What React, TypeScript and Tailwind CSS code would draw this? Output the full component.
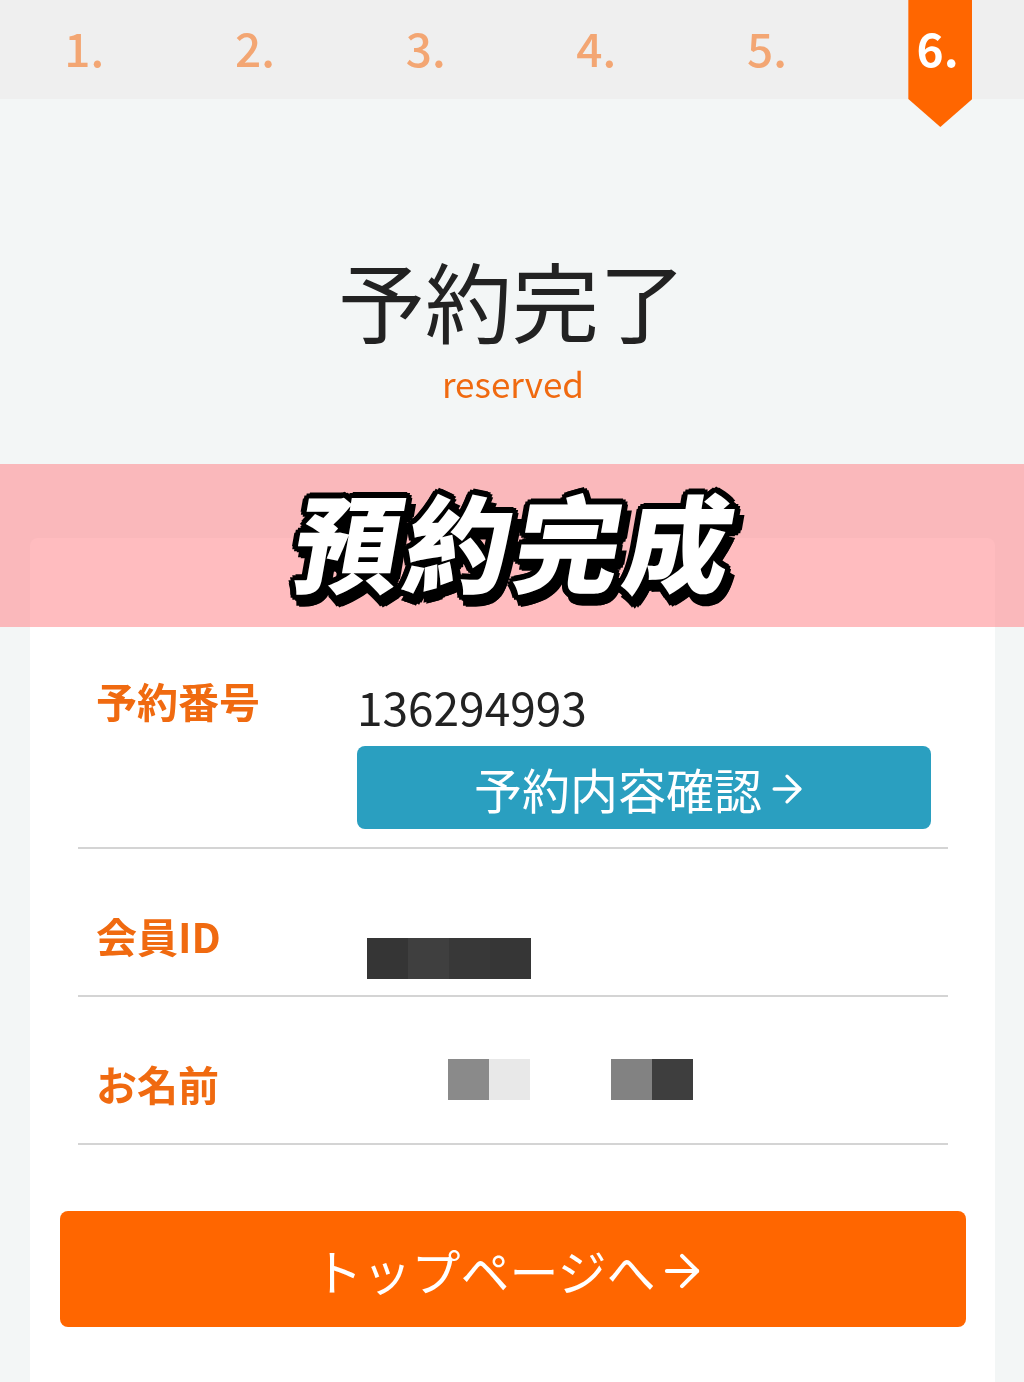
import { ArrowRight } from 'lucide-react';

const jp = 'font-["Noto_Sans_CJK_JP","Noto_Sans",sans-serif]';

const steps = ['1.', '2.', '3.', '4.', '5.', '6.'];

function StepBar() {
  return (
    <div className="grid grid-cols-6 h-[99px] bg-[#efefef] shrink-0">
      {steps.map((s, i) => {
        const active = i === 5;
        return (
          <div key={s} className="relative flex justify-center">
            {active && (
              <div className="absolute top-0 left-[87px] -translate-x-1/2 w-[64px] h-[127px] bg-[#ff6600] [clip-path:polygon(0_0,100%_0,100%_78%,50%_100%,0_78%)]" />
            )}
            <span
              className={`relative pt-[15px] pr-[2px] text-[46px] leading-[64px] ${active ? 'text-white font-bold' : 'text-[#f3a673] font-medium'}`}
            >
              {s}
            </span>
          </div>
        );
      })}
    </div>
  );
}

function Row({ label, labelTop, children, className }: { label: string; labelTop: string; children: React.ReactNode; className: string }) {
  return (
    <div className={`flex border-b-2 border-[#d4d4d4] ${className}`}>
      <div className={`w-[279px] pl-[18px] shrink-0 text-[41px] leading-[56px] font-bold text-[#f06a10] ${labelTop}`}>{label}</div>
      <div className="flex-1 min-w-0">{children}</div>
    </div>
  );
}

function Mosaic({ colors }: { colors: string[] }) {
  return (
    <div className="flex">
      {colors.map((c, i) => (
        <div key={i} className="w-[41px] h-[41px]" style={{ backgroundColor: c }} />
      ))}
    </div>
  );
}

export default function App() {
  return (
    <div className={`relative h-[1382px] overflow-hidden bg-[#f3f6f6] flex flex-col blur-[0.5px] ${jp}`}>
      <StepBar />

      {/* Title */}
      <div className="h-[439px] shrink-0 pt-[148px] flex flex-col items-center">
        <h1 className="text-[87px] leading-[104px] font-normal text-[#222]">予約完了</h1>
        <p className="text-[35px] leading-[46px] text-[#f06a10] mt-[9px] pl-[2px]">reserved</p>
      </div>

      {/* Card */}
      <div className="flex-1 ml-[30px] mr-[29px] bg-white rounded-t-lg">
        <div className="pl-[48px] pr-[47px] pt-[134px]">
          <Row label="予約番号" labelTop="" className="h-[177px]">
            <div className="w-[574px] pt-[5px]">
              <div className="text-[46px] leading-[62px] font-normal text-[#222] -mt-[2px] mb-[9px]">136294993</div>
              <div className="h-[83px] bg-[#2a9fc0] rounded-lg flex items-center justify-center text-white text-[48px] leading-none font-normal pr-[5px]">
                予約内容確認
                <ArrowRight className="w-[44px] h-[44px] ml-[3px] mt-[3px]" strokeWidth={1.8} />
              </div>
            </div>
          </Row>
          <Row label="会員ID" labelTop="pt-[58px]" className="h-[148px]">
            <div className="pt-[89px] pl-[10px]">
              <Mosaic colors={['#353535', '#3f3f3f', '#383838', '#363636']} />
            </div>
          </Row>
          <Row label="お名前" labelTop="pt-[58px]" className="h-[148px]">
            <div className="pt-[62px] pl-[91px] flex gap-[81px]">
              <Mosaic colors={['#8a8a8a', '#e8e8e8']} />
              <Mosaic colors={['#828282', '#3e3e3e']} />
            </div>
          </Row>
        </div>
        <div className="ml-[30px] mr-[29px] mt-[66px] h-[116px] rounded-lg bg-[#ff6600] flex items-center justify-center text-white text-[49px] font-normal leading-none pr-[5px]">
          トップページへ
          <ArrowRight className="w-[52px] h-[52px] mt-[4px]" strokeWidth={1.8} />
        </div>
      </div>

      {/* Translucent caption band over the page */}
      <div className="absolute left-0 right-0 top-[464px] h-[163px] bg-[#ff8f94]/60 flex items-center justify-center">
        <span className='-mt-[14px] ml-[10px] text-[106px] leading-none font-black text-white tracking-[4px] [transform:skewX(-10deg)] font-["Noto_Sans_CJK_TC",sans-serif] [text-shadow:6px_0_#000,5px_3px_#000,3px_5px_#000,0_6px_#000,-3px_5px_#000,-5px_3px_#000,-6px_0_#000,-5px_-3px_#000,-3px_-5px_#000,0_-6px_#000,3px_-5px_#000,5px_-3px_#000,3px_3px_#000,5px_6px_#000,8px_9px_#000,11px_6px_#000,10px_9px_#000,8px_11px_#000,5px_12px_#000,2px_11px_#000]'>
          預約完成
        </span>
      </div>
    </div>
  );
}
